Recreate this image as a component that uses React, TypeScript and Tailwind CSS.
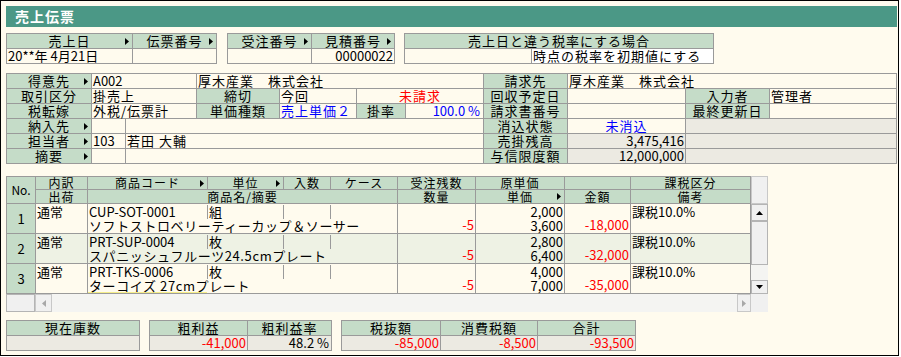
import React from 'react';

type Kids = { children?: React.ReactNode; className?: string };

const GRID = 'grid w-max gap-px bg-[#9a9a9a] p-px';

function Arrow({ dir = 'right', color = '#000' }: { dir?: 'right' | 'left' | 'up' | 'down'; color?: string }) {
  if (dir === 'up')
    return (
      <svg width="7" height="4" viewBox="0 0 7 4">
        <path d="M0 4L3.5 0L7 4Z" fill={color} />
      </svg>
    );
  if (dir === 'down')
    return (
      <svg width="7" height="4" viewBox="0 0 7 4">
        <path d="M0 0L3.5 4L7 0Z" fill={color} />
      </svg>
    );
  if (dir === 'left')
    return (
      <svg width="4" height="7" viewBox="0 0 4 7">
        <path d="M4 0L0 3.5L4 7Z" fill={color} />
      </svg>
    );
  return (
    <svg width="4" height="7" viewBox="0 0 4 7" className="shrink-0">
      <path d="M0 0L4 3.5L0 7Z" fill={color} />
    </svg>
  );
}

function Label({ children, className = '', arrow }: Kids & { arrow?: boolean }) {
  if (arrow) {
    return (
      <div className={`flex items-center bg-[#c5dcc8] tracking-[1px] whitespace-nowrap ${className}`}>
        <span className="w-[7px] shrink-0" />
        <span className="flex-1 text-center">{children}</span>
        <span className="flex w-[7px] shrink-0">
          <Arrow />
        </span>
      </div>
    );
  }
  return (
    <div className={`flex items-center justify-center bg-[#c5dcc8] tracking-[1px] whitespace-nowrap ${className}`}>
      {children}
    </div>
  );
}

function V({ children, className = '' }: Kids) {
  return <div className={`whitespace-nowrap bg-[#fffbee] px-px ${className}`}>{children}</div>;
}

function G({ children, className = '' }: Kids) {
  return <div className={`whitespace-nowrap bg-[#eceae2] px-px ${className}`}>{children}</div>;
}

const ROWS = [
  {
    no: '1',
    code: 'CUP-SOT-0001',
    unit: '組',
    name: 'ソフトストロベリーティーカップ＆ソーサー',
    cost: '2,000',
    price: '3,600',
    amount: '-18,000',
  },
  {
    no: '2',
    code: 'PRT-SUP-0004',
    unit: '枚',
    name: 'スパニッシュフルーツ24.5cmプレート',
    cost: '2,800',
    price: '6,400',
    amount: '-32,000',
  },
  {
    no: '3',
    code: 'PRT-TKS-0006',
    unit: '枚',
    name: 'ターコイズ 27cmプレート',
    cost: '4,000',
    price: '7,000',
    amount: '-35,000',
  },
];

function DataRow({ row, index }: { row: (typeof ROWS)[number]; index: number }) {
  const bg = index % 2 === 1 ? 'bg-[#eef2e4]' : 'bg-[#fffbee]';
  const line = 'border-r border-[#9a9a9a]';
  return (
    <div className={`flex h-[30px] border-b border-l border-[#9a9a9a] leading-[14px] ${bg}`}>
      <div className={`flex w-[29px] items-center justify-center bg-[#c5dcc8] ${line}`}>{row.no}</div>
      <div className={`w-[52px] px-px pt-px ${line}`}>通常</div>
      <div className={`flex w-[310px] flex-col ${line}`}>
        <div className="flex h-[15px] pt-px">
          <div className={`w-[120px] px-px ${line}`}>{row.code}</div>
          <div className={`w-[76px] px-px ${line}`}>{row.unit}</div>
          <div className={`w-[47px] ${line}`} />
          <div className="flex-1" />
        </div>
        <div className="h-[14px] whitespace-nowrap">
          <div
            className={`h-[14px] w-[119px] px-px tracking-[0.6px] ${index === 2 ? 'border-b border-[#f5ee8a]' : ''}`}
          >
            {row.name}
          </div>
        </div>
      </div>
      <div className={`flex w-[78px] flex-col justify-end px-px pb-px text-right text-[#ff0000] ${line}`}>-5</div>
      <div className={`flex w-[89px] flex-col justify-between px-px pt-px pb-px text-right ${line}`}>
        <span>{row.cost}</span>
        <span>{row.price}</span>
      </div>
      <div className={`flex w-[66px] flex-col justify-end px-px pb-px text-right text-[#ff0000] ${line}`}>
        {row.amount}
      </div>
      <div className={`w-[120px] px-px pt-px ${line}`}>課税10.0%</div>
    </div>
  );
}

function VScroll() {
  const btn = 'flex items-center justify-center border border-[#b4b4b4] bg-[#f0f0f0]';
  return (
    <div className="flex w-[17px] flex-col">
      <div className="h-[28px] border border-[#c8c8c8] bg-[#f0f0f0]" />
      <div className={`h-[17px] ${btn}`}>
        <Arrow dir="up" />
      </div>
      <div className={`h-[44px] ${btn}`} />
      <div className="h-[15px] bg-[#f4f4f2]" />
      <div className={`h-[14px] ${btn}`}>
        <Arrow dir="down" />
      </div>
    </div>
  );
}

function HScroll() {
  const btn = 'flex items-center justify-center border border-[#c8c8c8] bg-[#f0f0f0]';
  return (
    <div className="flex h-[18px] w-[762px]">
      <div className="w-[29px] border border-[#b4b4b4] bg-[#f0f0f0]" />
      <div className={`w-[17px] ${btn}`}>
        <Arrow dir="left" color="#a8a8a8" />
      </div>
      <div className="flex-1 bg-[#f4f4f2]" />
      <div className={`w-[14px] ${btn}`}>
        <Arrow color="#a8a8a8" />
      </div>
      <div className="w-[17px] bg-[#f0f0f0]" />
    </div>
  );
}

export default function App() {
  return (
    <div className="h-[357px] w-[901px] bg-white font-['Noto_Sans_CJK_JP',sans-serif] text-[13px] text-black">
      <div className="flex h-[356px] w-[899px] flex-col border border-black bg-[#fffbee] pt-[5px] pr-px pl-[5px]">
        <div className="h-[21px] bg-[#4b9886] pl-[9px] text-[14px] leading-[21px] font-bold tracking-[1px] text-white">
          売上伝票
        </div>

        {/* 伝票ヘッダ */}
        <div className="mt-[6px] flex gap-[9px] leading-[14px]">
          <div className={`${GRID} grid-cols-[125px_83px] grid-rows-[14px_14px]`}>
            <Label arrow>売上日</Label>
            <Label arrow>伝票番号</Label>
            <V>20**年 4月21日</V>
            <V />
          </div>
          <div className={`${GRID} ml-px grid-cols-[83px_82px] grid-rows-[14px_14px]`}>
            <Label arrow>受注番号</Label>
            <Label arrow>見積番号</Label>
            <V />
            <V className="text-right">00000022</V>
          </div>
          <div className={`${GRID} grid-cols-[126px_181px] grid-rows-[14px_14px]`}>
            <Label className="col-span-2">売上日と違う税率にする場合</Label>
            <V />
            <div className="bg-white px-px tracking-[1px] whitespace-nowrap">時点の税率を初期値にする</div>
          </div>
        </div>

        {/* 得意先情報 */}
        <div
          className={`${GRID} mt-[9px] grid-cols-[84px_33px_70px_82px_76px_48px_77px_83px_117px_83px_126px] grid-rows-[repeat(6,14px)] leading-[14px]`}
        >
          <Label arrow>得意先</Label>
          <V className="col-span-2">A002</V>
          <V className="col-span-4 tracking-[1px]">厚木産業　株式会社</V>
          <Label>請求先</Label>
          <V className="col-span-3 tracking-[1px]">厚木産業　株式会社</V>

          <Label>取引区分</Label>
          <V className="col-span-2 tracking-[1px]">掛売上</V>
          <Label>締切</Label>
          <V className="tracking-[1px]">今回</V>
          <V className="col-span-2 text-center tracking-[1px] text-[#ff0000]">未請求</V>
          <Label>回収予定日</Label>
          <V />
          <Label>入力者</Label>
          <V className="tracking-[1px]">管理者</V>

          <Label>税転嫁</Label>
          <V className="col-span-2 tracking-[1px]">外税/伝票計</V>
          <Label>単価種類</Label>
          <V className="tracking-[1px] text-[#0000ff]">売上単価２</V>
          <Label>掛率</Label>
          <V className="pr-[3px] text-right text-[#0000ff]">100.0 %</V>
          <Label>請求書番号</Label>
          <V />
          <Label>最終更新日</Label>
          <V />

          <Label arrow>納入先</Label>
          <V />
          <V className="col-span-5" />
          <Label>消込状態</Label>
          <V className="text-center tracking-[1px] text-[#0000ff]">未消込</V>
          <G className="col-span-2" />

          <Label arrow>担当者</Label>
          <V>103</V>
          <V className="col-span-5 tracking-[1px]">若田 大輔</V>
          <Label>売掛残高</Label>
          <G className="text-right">3,475,416</G>
          <G className="col-span-2" />

          <Label arrow>摘要</Label>
          <V />
          <V className="col-span-5" />
          <Label>与信限度額</Label>
          <G className="text-right">12,000,000</G>
          <G className="col-span-2" />
        </div>

        {/* 明細 */}
        <div className="mt-[12px] flex flex-col">
          <div className="flex">
            <div className="flex flex-col">
              <div
                className={`${GRID} grid-cols-[28px_51px_119px_75px_46px_66px_77px_88px_65px_119px] grid-rows-[12px_13px] text-[12px] leading-[12px]`}
              >
                <Label className="row-span-2 tracking-normal">No.</Label>
                <Label>内訳</Label>
                <Label arrow>商品コード</Label>
                <Label arrow>単位</Label>
                <Label>入数</Label>
                <Label>ケース</Label>
                <Label>受注残数</Label>
                <Label>原単価</Label>
                <Label />
                <Label>課税区分</Label>
                <Label>出荷</Label>
                <Label className="col-span-4">商品名/摘要</Label>
                <Label>数量</Label>
                <Label arrow>単価</Label>
                <Label>金額</Label>
                <Label>備考</Label>
              </div>
              {ROWS.map((row, i) => (
                <DataRow key={row.no} row={row} index={i} />
              ))}
            </div>
            <VScroll />
          </div>
          <HScroll />
        </div>

        {/* 合計 */}
        <div className="mt-[8px] flex gap-[9px] leading-[14px]">
          <div className={`${GRID} grid-cols-[132px] grid-rows-[14px_14px]`}>
            <Label>現在庫数</Label>
            <G />
          </div>
          <div className={`${GRID} grid-cols-[97px_83px] grid-rows-[14px_14px]`}>
            <Label>粗利益</Label>
            <Label>粗利益率</Label>
            <G className="text-right text-[#ff0000]">-41,000</G>
            <G className="pr-[2px] text-right">48.2 %</G>
          </div>
          <div className={`${GRID} grid-cols-[98px_96px_97px] grid-rows-[14px_14px]`}>
            <Label>税抜額</Label>
            <Label>消費税額</Label>
            <Label>合計</Label>
            <G className="text-right text-[#ff0000]">-85,000</G>
            <G className="text-right text-[#ff0000]">-8,500</G>
            <G className="text-right text-[#ff0000]">-93,500</G>
          </div>
        </div>
      </div>
    </div>
  );
}
